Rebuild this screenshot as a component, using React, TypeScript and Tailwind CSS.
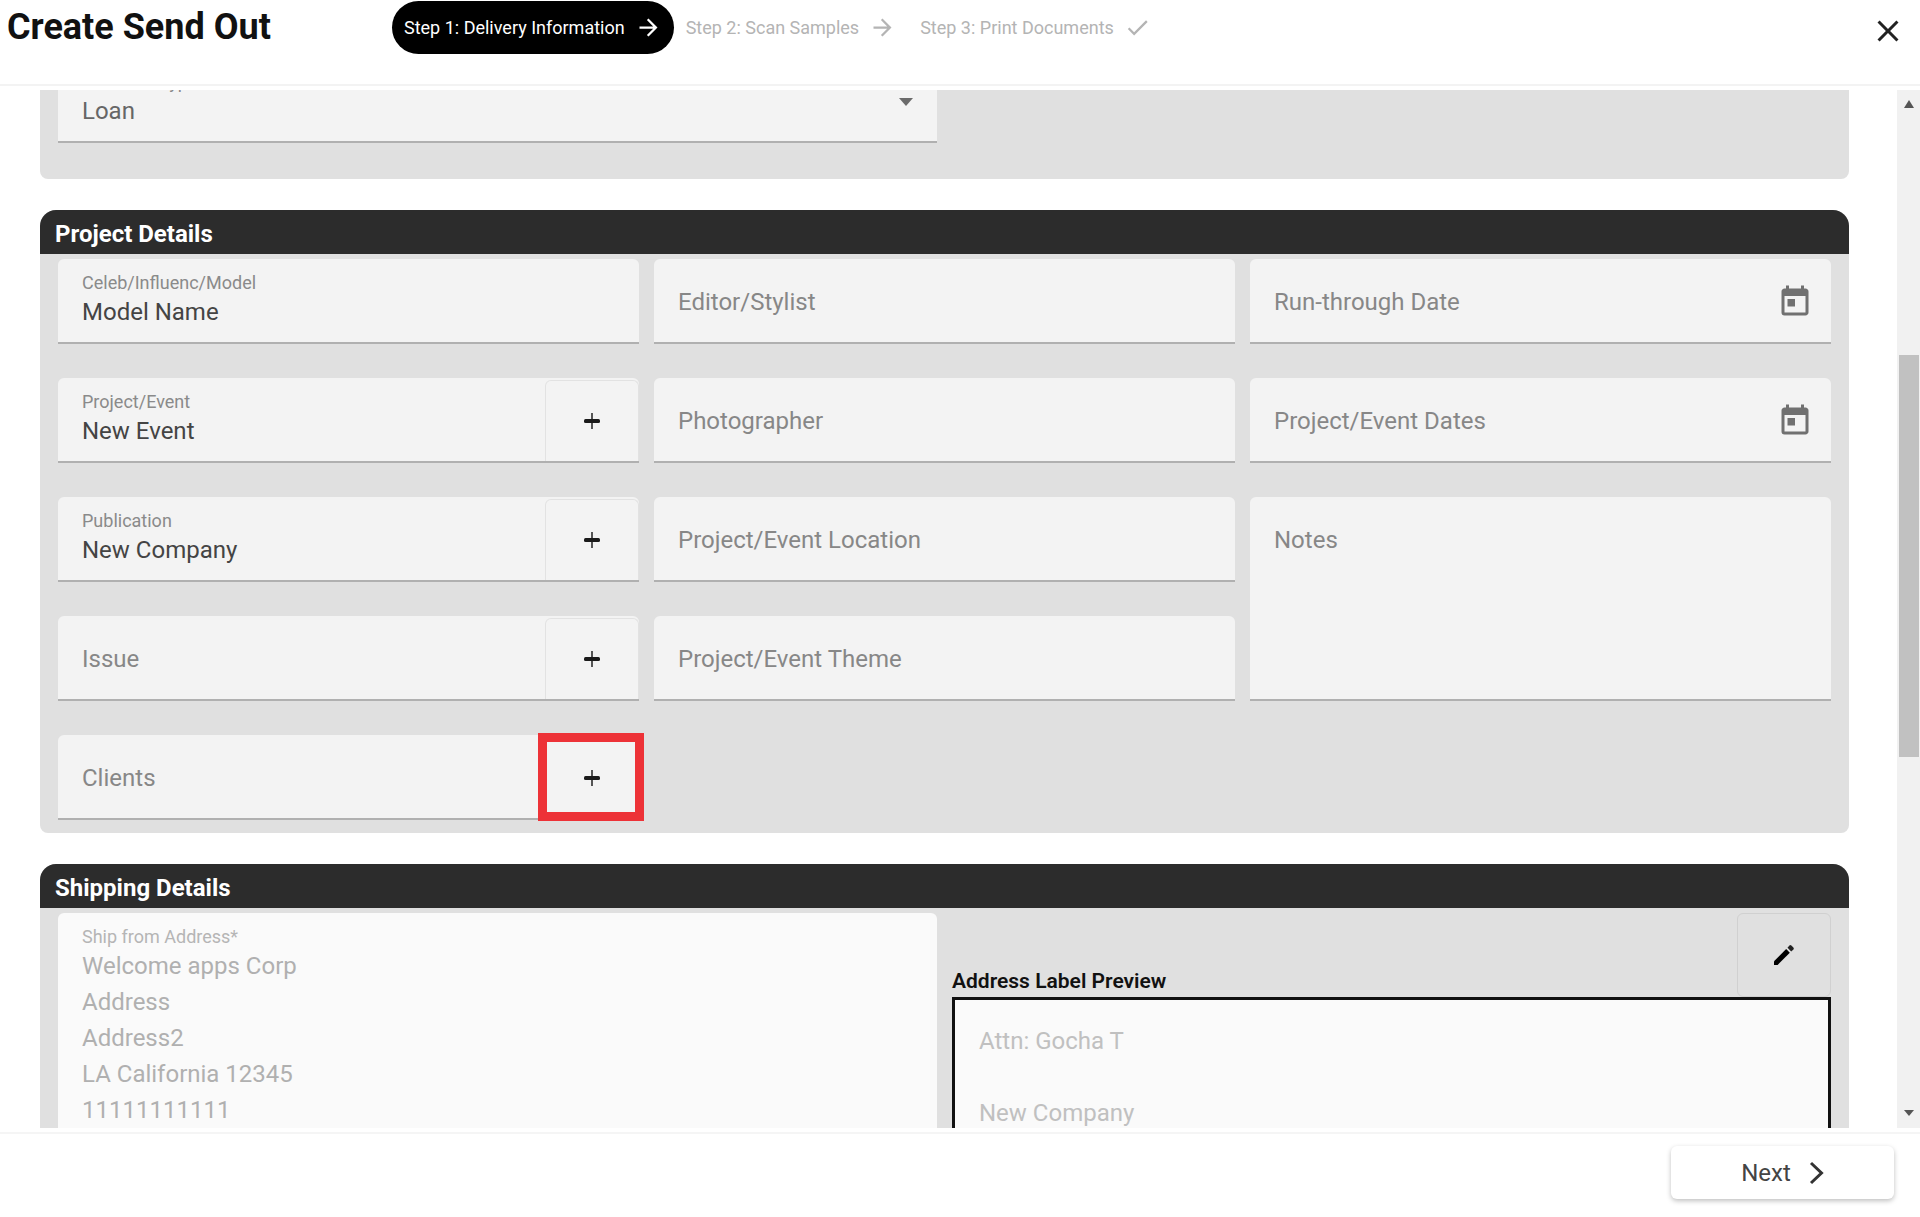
import React from 'react';
import { MdArrowForward, MdCheck, MdClose, MdToday } from 'react-icons/md';

const surface = 'rounded-t-md border-b-2 border-[#b0b0b0] bg-[#f3f3f3]';

const PlusIcon: React.FC = () => (
  <svg width="16" height="16" viewBox="0 0 16 16" aria-hidden="true">
    <rect x="7" y="0" width="2" height="16" fill="#555" />
    <rect x="0" y="6" width="16" height="4" rx="1.5" fill="#1a1a1a" />
  </svg>
);

const PencilIcon: React.FC = () => (
  <svg width="22" height="22" viewBox="0 0 22 22" aria-hidden="true">
    <path d="M1 17.2L13.2 5l3.6 3.8L4.6 21H1z" fill="#000" />
    <path d="M14.5 3.8l1.9-2.2q1-1 2 0l2 2q1 1 0 2l-2.2 2z" fill="#222" />
  </svg>
);

const ChevronIcon: React.FC = () => (
  <svg width="15" height="24" viewBox="0 0 15 24" aria-hidden="true">
    <path d="M2 2l10.5 10L2 22" fill="none" stroke="#333" strokeWidth="3" />
  </svg>
);

interface FieldProps {
  label: string;
  value?: string;
  children?: React.ReactNode;
}

const Field: React.FC<FieldProps> = ({ label, value, children }) => (
  <div className={`flex h-[85px] ${surface}`}>
    <label className="flex min-w-0 flex-1 flex-col justify-center pt-0.5 pl-6">
      {value ? (
        <>
          <span className="text-lg leading-5 text-[#8a8a8a]">{label}</span>
          <input
            className="h-[38px] w-full bg-transparent text-2xl text-[#444] outline-none"
            defaultValue={value}
          />
        </>
      ) : (
        <input
          className="w-full bg-transparent text-2xl text-[#444] outline-none placeholder:text-[#878787]"
          aria-label={label}
          placeholder={label}
        />
      )}
    </label>
    {children}
  </div>
);

const AddButton: React.FC<{ label: string; highlighted?: boolean }> = ({ label, highlighted }) => (
  <div className="relative mt-[2px] flex w-[94px]">
    <button
      type="button"
      aria-label={label}
      className="flex flex-1 items-center justify-center rounded-t-md border border-b-0 border-[#e2e2e2] bg-[#f3f3f3] pr-px"
    >
      <PlusIcon />
    </button>
    {highlighted && (
      <div className="pointer-events-none absolute -top-1 -right-[5px] -bottom-[3px] -left-[7px] border-[9px] border-[#ed3237]" />
    )}
  </div>
);

const DateButton: React.FC<{ label: string }> = ({ label }) => (
  <button type="button" aria-label={label} className="px-[18px] pt-0.5 text-[#707070]">
    <MdToday size={36} />
  </button>
);

const SectionHeader: React.FC<{ title: string }> = ({ title }) => (
  <h2 className="flex h-11 items-center rounded-t-2xl bg-[#2c2c2c] px-[15px] pt-1 text-2xl font-bold text-white">
    {title}
  </h2>
);

const address = 'Welcome apps Corp\nAddress\nAddress2\nLA California 12345\n11111111111';

const App: React.FC = () => {
  return (
    <div className="flex h-screen flex-col overflow-hidden bg-white font-[Roboto,sans-serif]">
      <header className="flex h-[86px] shrink-0 items-start border-b-2 border-[#f3f3f3] pr-[14px]">
        <h1 className="w-[392px] shrink-0 pt-[7px] pl-[7px] text-4xl font-bold text-[#111]">
          Create Send Out
        </h1>
        <nav className="flex items-center pt-px text-lg text-[#b4b4b4]">
          <button
            type="button"
            className="mr-3 flex h-[53px] items-center gap-2.5 rounded-full bg-black px-3 text-white"
          >
            Step 1: Delivery Information
            <MdArrowForward size={27} />
          </button>
          <button type="button" className="mr-6 flex items-center gap-2.5">
            Step 2: Scan Samples
            <MdArrowForward size={27} />
          </button>
          <button type="button" className="flex items-center gap-2.5">
            Step 3: Print Documents
            <MdCheck size={27} />
          </button>
        </nav>
        <button type="button" aria-label="Close" className="mt-[13px] ml-auto text-[#222]">
          <MdClose size={36} />
        </button>
      </header>

      <div className="my-1 flex min-h-0 flex-1">
        <main className="min-w-0 flex-1 overflow-hidden pr-12 pl-10">
          <section className="-mt-8 grid grid-cols-2 gap-[15px] rounded-b-lg bg-[#e0e0e0] px-[18px] pb-9">
            <label className={`relative flex h-[85px] flex-col justify-center pt-0.5 pl-6 ${surface}`}>
              <span className="text-lg leading-5 text-[#8a8a8a]">Send Out Type</span>
              <select className="h-[38px] w-full appearance-none bg-transparent text-2xl text-[#666] outline-none">
                <option>Loan</option>
              </select>
              <svg
                className="pointer-events-none absolute top-[40px] right-6"
                width="14"
                height="8"
                viewBox="0 0 14 8"
                aria-hidden="true"
              >
                <path d="M0 0h14L7 8z" fill="#6b6b6b" />
              </svg>
            </label>
          </section>

          <section className="mt-[31px] rounded-t-2xl rounded-b-lg bg-[#e0e0e0]">
            <SectionHeader title="Project Details" />
            <div className="grid grid-cols-3 gap-x-[15px] gap-y-[34px] px-[18px] pt-[5px] pb-[13px]">
              <Field label="Celeb/Influenc/Model" value="Model Name" />
              <Field label="Editor/Stylist" />
              <Field label="Run-through Date">
                <DateButton label="Pick run-through date" />
              </Field>

              <Field label="Project/Event" value="New Event">
                <AddButton label="Add project" />
              </Field>
              <Field label="Photographer" />
              <Field label="Project/Event Dates">
                <DateButton label="Pick project dates" />
              </Field>

              <Field label="Publication" value="New Company">
                <AddButton label="Add publication" />
              </Field>
              <Field label="Project/Event Location" />
              <textarea
                className={`row-span-2 resize-none px-6 pt-[27px] text-2xl text-[#444] outline-none placeholder:text-[#878787] ${surface}`}
                aria-label="Notes"
                placeholder="Notes"
              />

              <Field label="Issue">
                <AddButton label="Add issue" />
              </Field>
              <Field label="Project/Event Theme" />

              <div className="col-start-1">
                <Field label="Clients">
                  <AddButton label="Add client" highlighted />
                </Field>
              </div>
            </div>
          </section>

          <section className="mt-[31px] rounded-t-2xl bg-[#e0e0e0]">
            <SectionHeader title="Shipping Details" />
            <div className="grid grid-cols-2 gap-[15px] px-[18px] pt-[5px]">
              <label className="flex flex-col rounded-t-md bg-[#fafafa] pt-[14px] pl-6">
                <span className="text-lg leading-5 text-[#b5b5b5]">Ship from Address*</span>
                <textarea
                  className="mt-px w-full resize-none overflow-hidden bg-transparent text-2xl leading-9 text-[#b0b0b0] outline-none"
                  rows={6}
                  readOnly
                  defaultValue={address}
                />
              </label>
              <div>
                <div className="flex items-end justify-between">
                  <h3 className="pb-0.5 text-[21px] leading-7 font-semibold text-[#111]">
                    Address Label Preview
                  </h3>
                  <button
                    type="button"
                    aria-label="Edit address label"
                    className="flex h-[84px] w-[94px] items-center justify-center rounded-md border border-[#d0d0d0]"
                  >
                    <PencilIcon />
                  </button>
                </div>
                <div className="h-[240px] border-[3px] border-[#111] bg-[#fafafa] px-6 pt-[23px] text-2xl leading-9 text-[#c0c0c0]">
                  <p>Attn: Gocha T</p>
                  <p className="mt-9">New Company</p>
                </div>
              </div>
            </div>
          </section>
        </main>

        <div className="flex w-[23px] shrink-0 flex-col items-center bg-[#f1f1f1] pt-[10px] pb-3" aria-hidden="true">
          <svg width="10" height="8" viewBox="0 0 10 8">
            <path d="M5 0l5 8H0z" fill="#555" />
          </svg>
          <div className="mt-[247px] h-[402px] w-5 bg-[#c1c1c1]" />
          <svg className="mt-auto" width="10" height="6" viewBox="0 0 10 6">
            <path d="M0 0h10L5 6z" fill="#555" />
          </svg>
        </div>
      </div>

      <footer className="flex h-[85px] shrink-0 items-start justify-end border-t-2 border-[#f5f5f5] pt-3 pr-[26px]">
        <button
          type="button"
          className="flex h-[53px] w-[223px] items-center justify-center gap-[18px] rounded-md bg-white text-2xl text-[#444] shadow-[0_2px_5px_rgba(0,0,0,0.25)]"
        >
          Next
          <ChevronIcon />
        </button>
      </footer>
    </div>
  );
};

export default App;
